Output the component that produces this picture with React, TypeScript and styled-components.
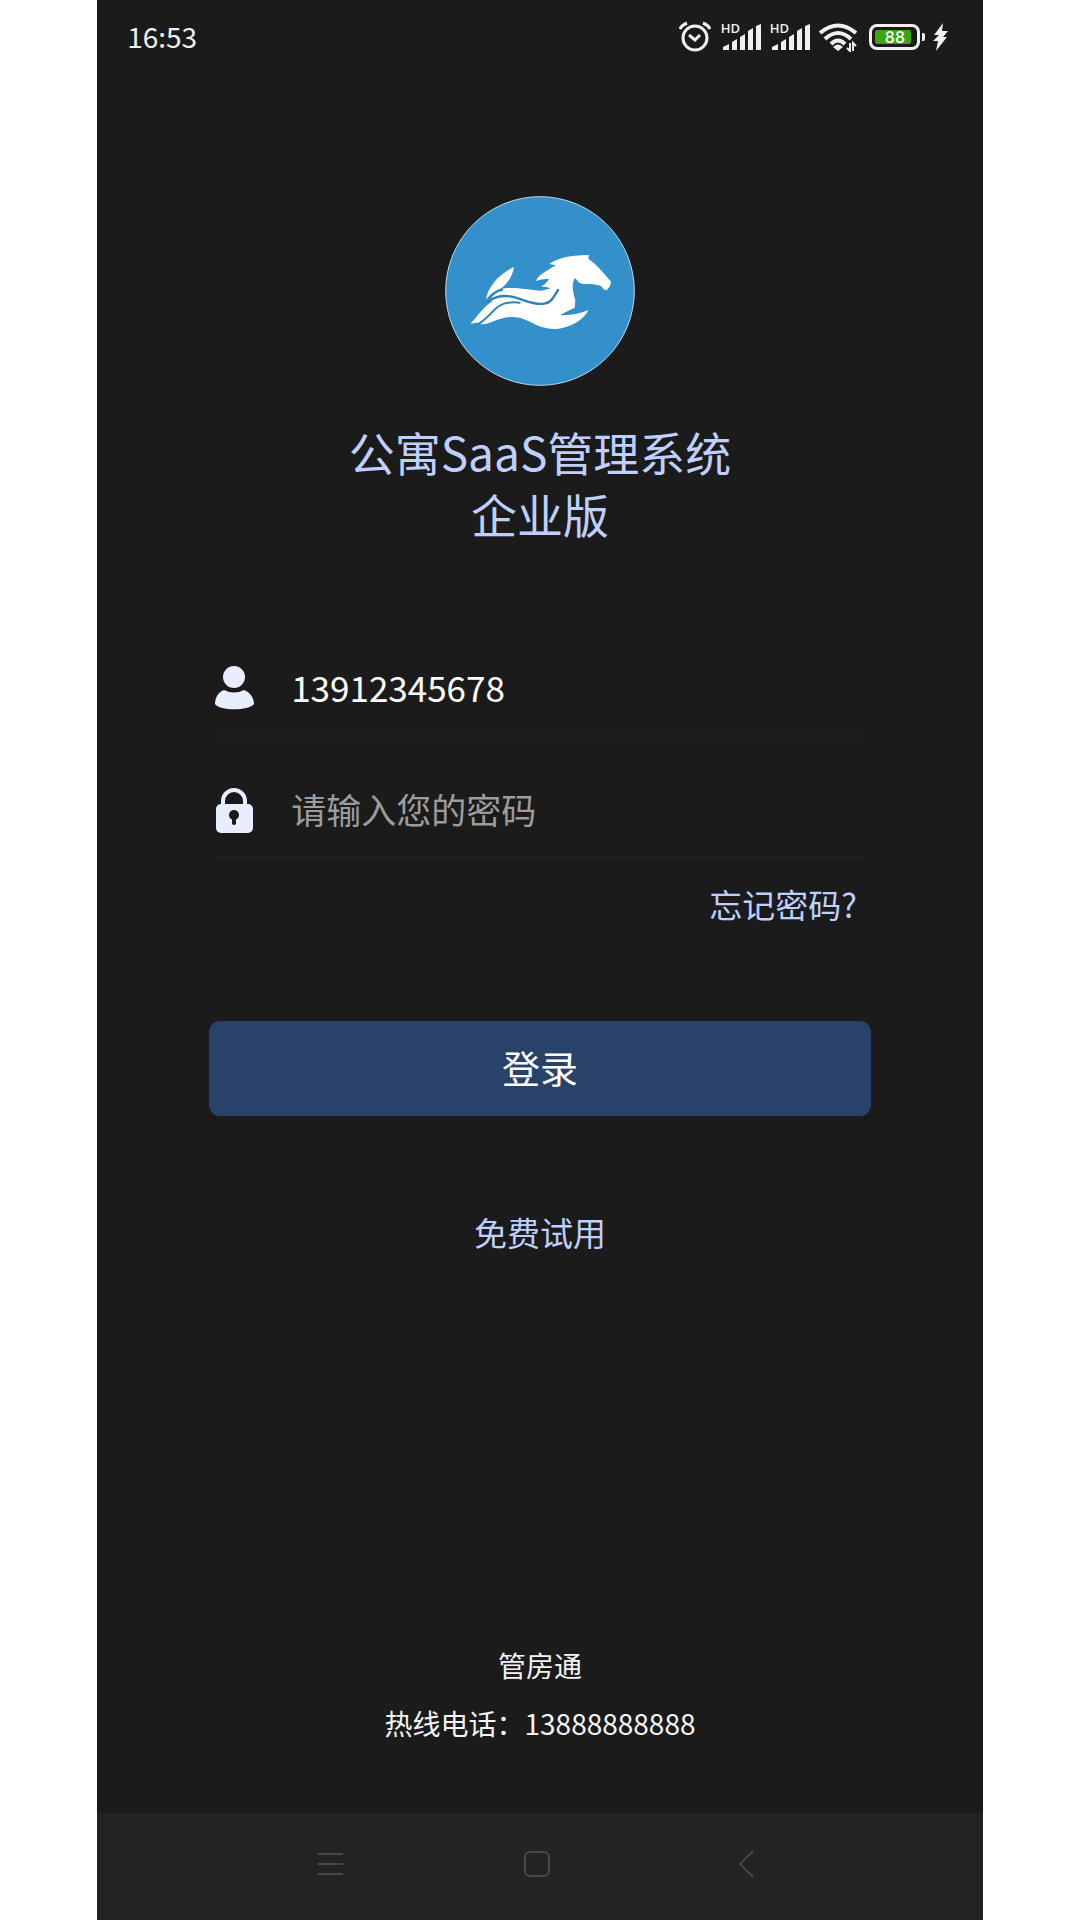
import React, { useState } from "react";
import styled, { createGlobalStyle } from "styled-components";

const GlobalStyle = createGlobalStyle`
  *, *::before, *::after { box-sizing: border-box; }
  body {
    margin: 0;
    background: #ffffff;
    font-family: "Noto Sans CJK SC", "Noto Sans", sans-serif;
  }
`;

const Screen = styled.div`
  display: flex;
  flex-direction: column;
  min-height: 100vh;
  margin: 0 9%;
  background: #1b1b1b;
  color: #f4f4f4;
`;

const StatusBar = styled.header`
  display: flex;
  align-items: center;
  justify-content: space-between;
  height: 74px;
  padding: 0 35px 0 30px;
`;

const Clock = styled.time`
  padding-bottom: 2px;
  font-size: 28px;
  line-height: 40px;
  color: #f0f0f0;
`;

const StatusIcons = styled.div`
  display: flex;
  align-items: center;
  gap: 8px;
  color: #f0f0f0;

  svg { display: block; }
`;

const SignalBox = styled.div`
  position: relative;
  width: 41px;
  height: 30px;
`;

const SignalTag = styled.span`
  position: absolute;
  top: 0;
  left: 0;
  font-family: "Open Sans", sans-serif;
  font-size: 13px;
  font-weight: 600;
  line-height: 13px;
`;

const BatteryBox = styled.div`
  display: flex;
  align-items: center;
  gap: 2px;
  margin-left: 3px;
`;

const BatteryShell = styled.div`
  display: flex;
  width: 51px;
  height: 26px;
  padding: 3px;
  border: 3px solid #f0f0f0;
  border-radius: 8px;
`;

const BatteryLevel = styled.div`
  flex: 1;
  margin-right: 3px;
  padding-left: 10px;
  border-radius: 2px;
  background: #3da50e;
  font-family: Inter, sans-serif;
  font-size: 16px;
  font-weight: 500;
  line-height: 14px;
  white-space: nowrap;
  color: #ffffff;
`;

const BatteryTip = styled.div`
  width: 3px;
  height: 8px;
  border-radius: 0 2px 2px 0;
  background: #f0f0f0;
`;

const Main = styled.main`
  display: flex;
  flex: 1;
  flex-direction: column;
  align-items: center;
  padding: 122px 112px 0;
`;

const Logo = styled.svg`
  display: block;
  width: 190px;
  height: 190px;
`;

const Title = styled.h1`
  margin: 34px 0 0;
  font-size: 46px;
  font-weight: 400;
  line-height: 62px;
  text-align: center;
  color: #bfcfff;
`;

const Form = styled.form`
  display: flex;
  flex-direction: column;
  width: 100%;
  margin-top: 96px;
`;

const Field = styled.label`
  display: flex;
  align-items: center;
  gap: 36px;
  height: 97px;
  margin: 0 6px;
  border-bottom: 2px solid #202020;

  & + & { margin-top: 25px; }

  svg { flex: none; display: block; }
`;

const TextInput = styled.input`
  flex: 1;
  min-width: 0;
  padding: 0 0 2px;
  border: 0;
  outline: 0;
  background: transparent;
  font: inherit;
  font-size: 35px;
  line-height: 50px;
  color: #ffffff;

  &::placeholder {
    color: #9c9c9c;
    opacity: 1;
  }
`;

const TextLink = styled.a`
  font-size: 33px;
  line-height: 48px;
  text-decoration: none;
  color: #bfcfff;
`;

const ForgotLink = styled(TextLink)`
  align-self: flex-end;
  margin: 21px 14px 0 0;
`;

const SubmitButton = styled.button`
  height: 95px;
  margin-top: 93px;
  padding: 0 0 4px;
  border: 0;
  border-radius: 11px;
  background: #284269;
  font: inherit;
  font-size: 38px;
  color: #ffffff;
`;

const TrialLink = styled(TextLink)`
  margin-top: 92px;
`;

const Contact = styled.footer`
  padding-bottom: 61px;
  font-size: 28px;
  line-height: 58px;
  text-align: center;

  p { margin: 0; }
`;

const NavBar = styled.nav`
  display: flex;
  align-items: center;
  justify-content: center;
  gap: 168px;
  height: 107px;
  padding: 0 4px 6px 0;
  background: #232323;
`;

const NavButton = styled.button`
  padding: 0;
  border: 0;
  background: transparent;
  color: #484848;

  svg { display: block; }
`;

const AlarmIcon = () => (
  <svg width="35" height="32" viewBox="0 0 35 32" fill="none" stroke="currentColor" strokeWidth="3" aria-hidden="true">
    <circle cx="17" cy="17" r="12" />
    <path d="M2 8Q4 4 9 2M25 2Q30 4 32 8" />
    <path d="M11 14l6 5 5-5" />
  </svg>
);

const Signal = () => (
  <SignalBox>
    <SignalTag>HD</SignalTag>
    <svg width="41" height="30" viewBox="0 0 41 30" fill="currentColor" aria-hidden="true">
      <path d="M2 28v-3l6-3v6zM11 28v-8l5-3v11zM19 28v-13l5-3v16zM27 28v-19l5-3v22zM35 28v-24l5-2v26z" />
    </svg>
  </SignalBox>
);

const WifiIcon = () => (
  <svg width="39" height="30" viewBox="0 0 39 30" fill="none" stroke="currentColor" strokeWidth="4" aria-hidden="true">
    <path d="M1 11Q19-4 37 11" />
    <path d="M6 17Q19 5 32 17" />
    <path d="M12 22Q19 15 26 22" />
    <path d="M14 25q5-5 10 0l-5 4z" fill="currentColor" stroke="none" />
    <path d="M31 21v8l-3-3M34 29v-8l3 3" strokeWidth="2" />
  </svg>
);

const BoltIcon = () => (
  <svg width="15" height="28" viewBox="0 0 15 28" fill="currentColor" aria-hidden="true">
    <path d="M10 0L1 12h5L0 18h5L3 28l11-14h-4l5-6h-6z" />
  </svg>
);

const HorseLogo = () => (
  <Logo viewBox="44 48 570 570" role="img" aria-label="管房通">
    <circle cx="329" cy="333" r="283" fill="#3390cb" stroke="#b9d9ec" strokeWidth="3" />
    <g fill="#ffffff">
      <path d="M251 260C228 273 205 289 190 308C176 326 169 342 167 358C181 341 196 331 213 325C233 309 247 287 251 260Z" />
      <path d="M176 359C185 343 201 328 224 325C256 322 293 329 326 332C338 333 347 330 356 325C348 321 340 320 331 321C342 315 351 307 356 297C343 296 330 298 317 303C323 286 343 276 377 256L357 252C378 236 412 226 476 225L474 236C498 252 518 277 541 304C543 313 537 323 530 330C522 331 517 326 513 319C493 308 465 317 449 309C441 305 440 299 434 293C421 316 429 339 435 361L433 385C420 389 406 396 393 405C420 407 451 400 474 390C462 418 424 441 385 446C350 450 323 439 296 424C256 402 222 411 190 424Q168 434 150 433L160 423Q140 430 120 431C145 406 159 380 187 363Z" />
    </g>
    <g fill="none" stroke="#2c82b7" strokeWidth="6" strokeLinecap="round">
      <path d="M174 364C194 350 218 345 244 350C277 356 306 376 342 371C365 368 372 346 383 330" strokeWidth="7" />
      <path d="M152 426C181 409 191 380 221 371C239 366 253 366 268 368" />
      <path d="M177 355Q193 334 216 329" />
      <path d="M331 321Q343 322 357 325M393 405L433 386" strokeWidth="3" />
    </g>
  </Logo>
);

const UserIcon = () => (
  <svg width="40" height="46" viewBox="0 0 40 46" fill="#e8edff" aria-hidden="true">
    <circle cx="19" cy="12" r="11" />
    <path d="M9 25Q19 30 29 25C35 27 39 33 39 39C34 46 4 46 0 39C0 33 3 27 9 25Z" />
  </svg>
);

const LockIcon = () => (
  <svg width="40" height="46" viewBox="0 0 40 46" aria-hidden="true">
    <path d="M8 19v-5a11 11 0 0 1 22 0v5" fill="none" stroke="#e8edff" strokeWidth="4" />
    <rect x="1" y="17" width="37" height="29" rx="5" fill="#e8edff" />
    <circle cx="19" cy="28" r="5" fill="#1b1b1b" />
    <path d="M17 29h4v8q-2 2-4 0z" fill="#1b1b1b" />
  </svg>
);

export default function App() {
  const [phone, setPhone] = useState("13912345678");
  const [password, setPassword] = useState("");

  return (
    <>
      <GlobalStyle />
      <Screen>
        <StatusBar>
          <Clock dateTime="16:53">16:53</Clock>
          <StatusIcons>
            <AlarmIcon />
            <Signal />
            <Signal />
            <WifiIcon />
            <BatteryBox>
              <BatteryShell>
                <BatteryLevel>88</BatteryLevel>
              </BatteryShell>
              <BatteryTip />
            </BatteryBox>
            <BoltIcon />
          </StatusIcons>
        </StatusBar>

        <Main>
          <HorseLogo />
          <Title>
            公寓SaaS管理系统
            <br />
            企业版
          </Title>
          <Form onSubmit={(event) => event.preventDefault()}>
            <Field>
              <UserIcon />
              <TextInput
                type="tel"
                aria-label="手机号"
                value={phone}
                onChange={(event) => setPhone(event.target.value)}
              />
            </Field>
            <Field>
              <LockIcon />
              <TextInput
                type="password"
                aria-label="密码"
                placeholder="请输入您的密码"
                value={password}
                onChange={(event) => setPassword(event.target.value)}
              />
            </Field>
            <ForgotLink href="#forgot">忘记密码?</ForgotLink>
            <SubmitButton type="submit">登录</SubmitButton>
          </Form>
          <TrialLink href="#trial">免费试用</TrialLink>
        </Main>

        <Contact>
          <p>管房通</p>
          <p>热线电话：13888888888</p>
        </Contact>

        <NavBar>
          <NavButton type="button" aria-label="菜单">
            <svg width="40" height="28" viewBox="0 0 40 28" fill="none" stroke="currentColor" strokeWidth="2">
              <path d="M8 4h25M8 14h25M8 24h25" />
            </svg>
          </NavButton>
          <NavButton type="button" aria-label="主屏幕">
            <svg width="40" height="28" viewBox="0 0 40 28" fill="none" stroke="currentColor" strokeWidth="2">
              <rect x="7" y="2" width="24" height="24" rx="5" />
            </svg>
          </NavButton>
          <NavButton type="button" aria-label="返回">
            <svg width="40" height="28" viewBox="0 0 40 28" fill="none" stroke="currentColor" strokeWidth="2">
              <path d="M27 1L14 14l13 13" />
            </svg>
          </NavButton>
        </NavBar>
      </Screen>
    </>
  );
}
